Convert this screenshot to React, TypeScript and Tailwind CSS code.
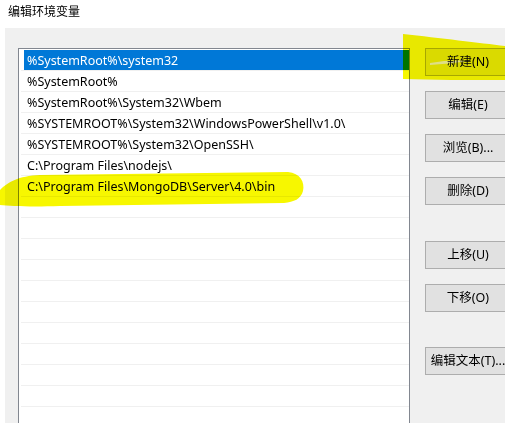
const paths = [
  "%SystemRoot%\\system32",
  "%SystemRoot%",
  "%SystemRoot%\\System32\\Wbem",
  "%SYSTEMROOT%\\System32\\WindowsPowerShell\\v1.0\\",
  "%SYSTEMROOT%\\System32\\OpenSSH\\",
  "C:\\Program Files\\nodejs\\",
  "C:\\Program Files\\MongoDB\\Server\\4.0\\bin",
];

const buttons = [
  { label: "新建(N)", mt: "mt-0" },
  { label: "编辑(E)", mt: "mt-[15px]" },
  { label: "浏览(B)...", mt: "mt-[15px]" },
  { label: "删除(D)", mt: "mt-[15px]" },
  { label: "上移(U)", mt: "mt-[36px]" },
  { label: "下移(O)", mt: "mt-[15px]" },
  { label: "编辑文本(T)...", mt: "mt-[35px]" },
];

export default function App() {
  const rows = [...paths, ...Array(12).fill("")];

  return (
    <div
      className="relative w-[505px] h-[423px] overflow-hidden bg-white text-[12px] text-black"
      style={{ fontFamily: '"Noto Sans", "Noto Sans CJK SC", sans-serif' }}
    >
      <div className="h-[28px] pl-[8px] pt-[3px] leading-[18px]">编辑环境变量</div>

      <div className="ml-[5px] h-[395px] bg-[#f0f0f0] flex pt-[20px] pl-[13px]">
        {/* path list */}
        <div className="w-[392px] h-[400px] shrink-0 border border-[#828790] bg-white pt-[1px] pl-[2px] text-[12.5px]">
          {rows.map((p, i) => (
            <div key={i} className="h-[21px] border-b border-[#f0f0f0]">
              <div
                className={
                  i === 0
                    ? "ml-[3px] h-[20px] pl-[3px] pt-[1px] leading-[20px] bg-[#0078d7] text-white whitespace-nowrap"
                    : "h-[20px] pl-[6px] pt-[1px] leading-[20px] whitespace-nowrap"
                }
              >
                {p}
              </div>
            </div>
          ))}
        </div>

        {/* buttons */}
        <div className="flex flex-col ml-[15px] shrink-0 text-[12.5px]">
          {buttons.map((b) => (
            <div
              key={b.label}
              className={`${b.mt} w-[86px] h-[28px] border border-[#adadad] bg-[#e1e1e1] flex items-center justify-center whitespace-nowrap`}
            >
              {b.label}
            </div>
          ))}
        </div>
      </div>

      {/* highlighter marks */}
      <svg
        className="absolute inset-0 pointer-events-none mix-blend-multiply"
        width="505"
        height="423"
        viewBox="0 0 505 423"
      >
        <path
          d="M403 34 C440 38 480 43 505 46 L505 80 C470 80 430 80 403 79 Z"
          fill="#f7f700"
        />
        <path
          d="M430 63 C445 60 460 60 470 61 C455 63 442 64 430 65 Z"
          fill="#ffffff"
          opacity="0.6"
        />
        <path
          d="M0 190 C8 182 18 176 40 175 L288 172 C300 173 305 182 303 191 C301 199 294 202 284 203 L60 206 C30 207 10 206 0 205 Z"
          fill="#f7f700"
        />
      </svg>
    </div>
  );
}
